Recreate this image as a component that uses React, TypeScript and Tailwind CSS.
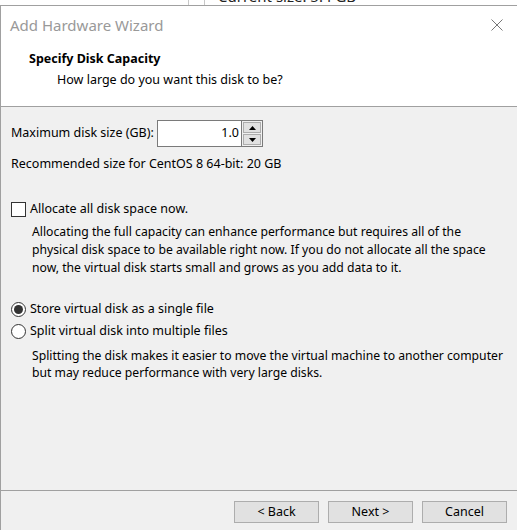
import React from 'react';

const font = { fontFamily: '"Noto Sans", "Open Sans", sans-serif' };

function WinButton({ label }: { label: string }) {
  return (
    <button className="w-[85px] h-[22px] bg-[#e1e1e1] border border-[#adadad] text-[12.5px] text-black leading-none">
      {label}
    </button>
  );
}

function Spinner() {
  return (
    <div className="flex flex-col w-[21px] h-[27px] border border-[#7a7a7a] border-l-0 bg-[#f0f0f0] p-[1px] gap-[1px]">
      <div className="flex-1 flex items-center justify-center bg-[#e1e1e1] border border-[#adadad]">
        <svg width="7" height="4" viewBox="0 0 7 4">
          <path d="M0 4 L3.5 0 L7 4 Z" fill="#000" />
        </svg>
      </div>
      <div className="flex-1 flex items-center justify-center bg-[#e1e1e1] border border-[#adadad]">
        <svg width="7" height="4" viewBox="0 0 7 4">
          <path d="M0 0 L3.5 4 L7 0 Z" fill="#000" />
        </svg>
      </div>
    </div>
  );
}

function Radio({ checked, label }: { checked?: boolean; label: string }) {
  return (
    <div className="flex items-center h-[18px]">
      <span className="w-[15px] h-[15px] rounded-full border border-[#333] bg-white flex items-center justify-center">
        {checked && <span className="w-[9px] h-[9px] rounded-full bg-[#333]" />}
      </span>
      <span className="ml-[4px]">{label}</span>
    </div>
  );
}

export default function App() {
  return (
    <div
      className="w-[517px] h-[530px] bg-white overflow-hidden flex flex-col text-[12.5px] text-black"
      style={font}
    >
      {/* window behind the dialog */}
      <div className="h-[5px] overflow-hidden flex items-end relative">
        <div className="absolute left-[188px] top-0 w-px h-[5px] bg-[#c8c8c8]" />
        <div className="absolute left-[204px] top-0 w-px h-[5px] bg-[#c8c8c8]" />
        <span className="absolute left-[218px] top-[-13px] text-[15px] leading-[18px] text-[#222]">
          Current size: 5.4 GB
        </span>
      </div>

      {/* dialog */}
      <div className="flex-1 flex flex-col border-l border-t border-[#a0a0a0]">
        <div className="h-[101px] border-b border-[#a0a0a0] bg-white flex flex-col">
          <div className="h-[38px] flex items-center justify-between pl-[9px] pr-[14px]">
            <span className="text-[15px] text-[#999]">Add Hardware Wizard</span>
            <svg width="12" height="12" viewBox="0 0 12 12">
              <path d="M0.5 0.5 L11.5 11.5 M11.5 0.5 L0.5 11.5" stroke="#777" strokeWidth="1" />
            </svg>
          </div>
          <div className="pl-[28px] leading-[18px] font-bold mt-[6px]">Specify Disk Capacity</div>
          <div className="pl-[56px] leading-[18px] mt-[3px]">How large do you want this disk to be?</div>
        </div>

        <div className="flex-1 bg-[#f0f0f0] px-[10px] flex flex-col">
          <div className="flex items-center mt-[13px]">
            <span className="w-[146px]">Maximum disk size (GB):</span>
            <div className="w-[85px] h-[27px] bg-white border border-[#7a7a7a] flex items-center justify-end pr-[2px]">
              1.0
            </div>
            <Spinner />
          </div>
          <div className="leading-[18px] mt-[8px]">Recommended size for CentOS 8 64-bit: 20 GB</div>

          <div className="flex items-center h-[18px] mt-[27px]">
            <span className="w-[15px] h-[15px] border border-[#333] bg-white" />
            <span className="ml-[4px]">Allocate all disk space now.</span>
          </div>
          <p className="pl-[21px] text-[12.2px] leading-[18px] mt-[5px] whitespace-nowrap">
            Allocating the full capacity can enhance performance but requires all of the
            <br />
            physical disk space to be available right now. If you do not allocate all the space
            <br />
            now, the virtual disk starts small and grows as you add data to it.
          </p>

          <div className="mt-[23px]">
            <Radio checked label="Store virtual disk as a single file" />
          </div>
          <div className="mt-[4px]">
            <Radio label="Split virtual disk into multiple files" />
          </div>
          <p className="pl-[21px] text-[12.2px] leading-[17px] mt-[7px] whitespace-nowrap">
            Splitting the disk makes it easier to move the virtual machine to another computer
            <br />
            but may reduce performance with very large disks.
          </p>
        </div>

        <div className="h-[40px] border-t border-[#a0a0a0] bg-[#f0f0f0] flex justify-end items-start pt-[10px] pr-[10px] gap-[9px]">
          <WinButton label="< Back" />
          <WinButton label="Next >" />
          <WinButton label="Cancel" />
        </div>
      </div>
    </div>
  );
}
